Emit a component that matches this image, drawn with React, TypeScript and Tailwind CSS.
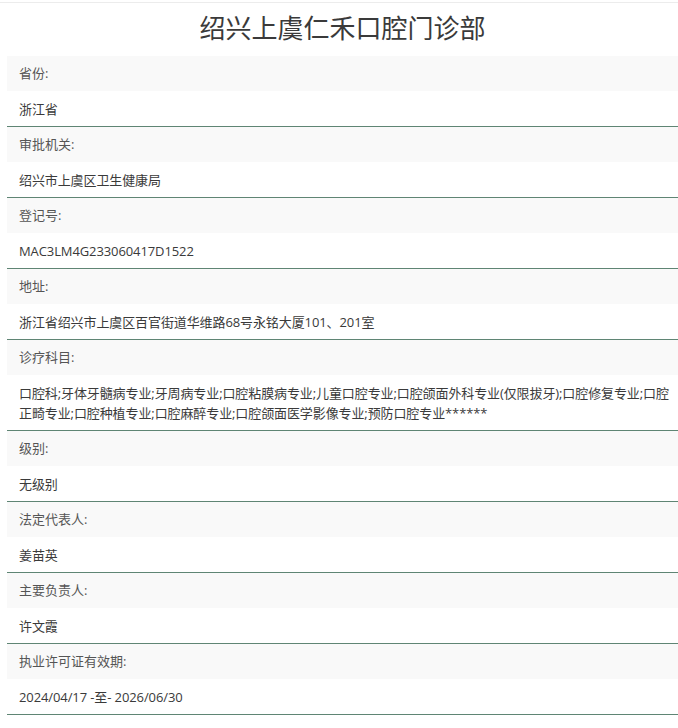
const rows: { label: string; value: string }[] = [
  { label: '省份:', value: '浙江省' },
  { label: '审批机关:', value: '绍兴市上虞区卫生健康局' },
  { label: '登记号:', value: 'MAC3LM4G233060417D1522' },
  { label: '地址:', value: '浙江省绍兴市上虞区百官街道华维路68号永铭大厦101、201室' },
  {
    label: '诊疗科目:',
    value:
      '口腔科;牙体牙髓病专业;牙周病专业;口腔粘膜病专业;儿童口腔专业;口腔颌面外科专业(仅限拔牙);口腔修复专业;口腔正畸专业;口腔种植专业;口腔麻醉专业;口腔颌面医学影像专业;预防口腔专业******',
  },
  { label: '级别:', value: '无级别' },
  { label: '法定代表人:', value: '姜苗英' },
  { label: '主要负责人:', value: '许文霞' },
  { label: '执业许可证有效期:', value: '2024/04/17 -至- 2026/06/30' },
];

export default function App() {
  return (
    <div className="min-h-[728px] bg-white font-['Open_Sans','Noto_Sans_CJK_SC',sans-serif] text-[13px]">
      <div className="pt-[2px]">
        <div className="h-px bg-[#ececec]" />
      </div>
      <h1 className="ml-[7px] flex h-[53px] items-center justify-center pb-[2px] text-[26px] font-normal text-[#3a3a3a]">
        绍兴上虞仁禾口腔门诊部
      </h1>
      <div className="ml-[7px]">
        {rows.map((row) => (
          <div key={row.label} className="border-b border-[#5f8574]">
            <div className="flex h-[35px] items-center bg-[#f9f9f9] pl-3 text-[#555]">{row.label}</div>
            <div className="bg-white py-[7.5px] pl-3 leading-5 tracking-[-0.1px] text-[#3a3a3a]">{row.value}</div>
          </div>
        ))}
      </div>
    </div>
  );
}
